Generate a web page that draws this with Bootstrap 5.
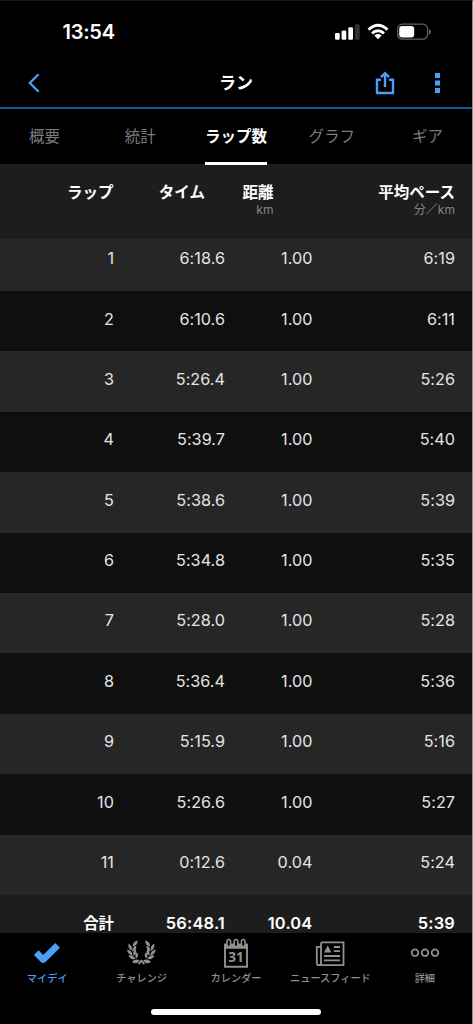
<!DOCTYPE html>
<html lang="ja" data-bs-theme="dark">
<head>
<meta charset="utf-8">
<meta name="viewport" content="width=device-width, initial-scale=1">
<title>ラン</title>
<link href="https://cdn.jsdelivr.net/npm/bootstrap@5.3.0/dist/css/bootstrap.min.css" rel="stylesheet">
<style>
body{background:#000;color:#fff;font-family:Inter,"Noto Sans CJK JP",sans-serif;font-size:16px;line-height:24px}
.app{width:473px;height:1024px;border-right:1px solid #8a8a8a;border-top:1px solid #161616}
svg{display:block;flex:none}
.status{height:62px;padding:0 40px 0 62.5px}
.clock{font-size:20px;font-weight:600;letter-spacing:-.25px}
.titlebar{height:46px;padding:0 31px 4px 27px;border-bottom:2px solid #1256a8}
.titlebar h1{font-size:17px;line-height:24px;font-weight:700}
.tabs{height:55px;font-size:15.5px;color:#7b7b7b}
.tabs span{flex:none;width:62px;margin:0 16.9px;height:56px;padding-top:16px;text-align:center;white-space:nowrap}
.tabs span.on{color:#fff;font-weight:700;border-bottom:3px solid #fff;position:relative;z-index:1}
.heads{height:75px;background:#1d1d1d;padding-top:17px;font-size:15.5px;font-weight:700}
.heads>div{text-align:right;white-space:nowrap}
.heads small{display:block;font-size:12px;line-height:14px;font-weight:400;color:#858585;margin-top:-2px;letter-spacing:.05px}
.lap{height:60.4px;display:grid;grid-template-columns:114px 111px 87.5px 142.5px;text-align:right;padding-top:15.5px;background:#0f0f0f;color:#e4e4e4;flex:none;font-size:16.2px;letter-spacing:.04px}
.lap:nth-child(odd){background:#262626}
.lap:first-child{height:52px;padding-top:7px}
.lap.total{height:38px;padding-top:16px;background:#1d1d1d;color:#fff;font-weight:600;font-size:16.4px;letter-spacing:.2px}
.lap.total span:first-child{font-size:15.4px;font-weight:700;letter-spacing:0;padding-top:1px}
.bottom{height:90px;color:#919191;font-size:10.2px;line-height:14px;font-weight:500}
.bottom .item{flex:1 1 0;height:54px;padding-top:5px}
.bottom .item svg{margin-bottom:3px}
.active-blue{color:#4a9ff8}
.homebar{width:170px;height:6px;border-radius:3px;background:#fff;margin:22px auto 0}
</style>
</head>
<body>
<div class="app d-flex flex-column overflow-hidden">
  <header>
    <div class="status d-flex align-items-center justify-content-between">
      <span class="clock">13:54</span>
      <svg width="98" height="18" viewBox="334 23 98 18">
        <g fill="#fff"><rect x="335" y="33" width="4.7" height="6.7" rx="1.3"/><rect x="341.6" y="30.5" width="4.7" height="9.2" rx="1.3"/><rect x="348.3" y="27.2" width="4.7" height="12.5" rx="1.3"/></g>
        <rect x="354.9" y="24.2" width="4.7" height="15.5" rx="1.3" fill="#333"/>
        <g fill="none" stroke="#fff" stroke-width="2.9"><path d="M368.5 29.6Q378 21 387.5 29.6"/><path d="M372 33.4Q378 28 384 33.4"/></g>
        <path d="M374.3 35.5Q378 32.7 381.7 35.5L378 39.3Z" fill="#fff"/>
        <rect x="397.6" y="24.2" width="30" height="15" rx="4.8" fill="none" stroke="#636363" stroke-width="1.2"/>
        <rect x="399.2" y="26" width="15" height="11.5" rx="3" fill="#fff"/><path d="M429 29v5.5q2-.8 2-2.7t-2-2.8Z" fill="#636363"/>
      </svg>
    </div>
    <div class="titlebar d-flex align-items-center justify-content-between position-relative active-blue">
      <svg width="14" height="22" viewBox="0 0 14 22" fill="none" stroke="currentColor" stroke-width="2.3"><path d="M11.6 2.2 2.8 11 11.6 19.8"/></svg>
      <h1 class="m-0 text-white position-absolute start-0 end-0 text-center">ラン</h1>
      <div class="d-flex align-items-center">
        <svg width="20" height="24" viewBox="0 0 20 24" fill="none" stroke="currentColor" stroke-width="2.4"><path d="M6 8.8H2v13.2h16V8.8h-4M10 16V2.5M6 6.2 10 2.2l4 4"/></svg>
        <svg width="46" height="22" viewBox="0 0 46 22" fill="currentColor"><path d="M40 1h5v5h-5zM40 8.5h5v5h-5zM40 16h5v5h-5z"/></svg>
      </div>
    </div>
    <nav class="tabs d-flex justify-content-center"><span>概要</span><span>統計</span><span class="on">ラップ数</span><span>グラフ</span><span>ギア</span></nav>
  </header>
  <div class="heads d-flex">
    <div style="width:113.5px">ラップ</div><div style="width:91.5px">タイム</div><div style="width:68.5px">距離<small>km</small></div><div style="width:181.5px">平均ペース<small>分／km</small></div>
  </div>
  <main class="d-flex flex-column">
    <div class="lap"><span>1</span><span>6:18.6</span><span>1.00</span><span>6:19</span></div>
    <div class="lap"><span>2</span><span>6:10.6</span><span>1.00</span><span>6:11</span></div>
    <div class="lap"><span>3</span><span>5:26.4</span><span>1.00</span><span>5:26</span></div>
    <div class="lap"><span>4</span><span>5:39.7</span><span>1.00</span><span>5:40</span></div>
    <div class="lap"><span>5</span><span>5:38.6</span><span>1.00</span><span>5:39</span></div>
    <div class="lap"><span>6</span><span>5:34.8</span><span>1.00</span><span>5:35</span></div>
    <div class="lap"><span>7</span><span>5:28.0</span><span>1.00</span><span>5:28</span></div>
    <div class="lap"><span>8</span><span>5:36.4</span><span>1.00</span><span>5:36</span></div>
    <div class="lap"><span>9</span><span>5:15.9</span><span>1.00</span><span>5:16</span></div>
    <div class="lap"><span>10</span><span>5:26.6</span><span>1.00</span><span>5:27</span></div>
    <div class="lap"><span>11</span><span>0:12.6</span><span>0.04</span><span>5:24</span></div>
    <div class="lap total"><span>合計</span><span>56:48.1</span><span>10.04</span><span>5:39</span></div>
  </main>
  <footer class="bottom">
    <div class="d-flex">
      <div class="item d-flex flex-column align-items-center active-blue">
        <svg width="28" height="30" viewBox="0 0 28 30"><path d="M3.2 14.6 10.2 21.6 24.6 7.4" fill="none" stroke="currentColor" stroke-width="6.6" stroke-linejoin="round"/></svg>マイデイ
      </div>
      <div class="item d-flex flex-column align-items-center">
        <svg width="30" height="30" viewBox="0 0 30 30" fill="currentColor">
          <defs><g id="branch">
            <path d="M6.2 9.4Q6.6 4.4 11.2 3.6Q11.4 8.8 6.2 9.4Z"/>
            <path d="M5.2 13.8Q1.2 11.6 2.2 6.6Q6.6 9.2 5.2 13.8Z"/>
            <path d="M5.9 14.6Q5.4 10.4 9.8 8.6Q10.6 13.4 5.9 14.6Z"/>
            <path d="M6.2 18.4Q1.2 17.4 .7 12.4Q5.6 13.4 6.2 18.4Z"/>
            <path d="M7.2 18.6Q5.8 14.8 9.2 12.2Q11.4 16.4 7.2 18.6Z"/>
            <path d="M9 22Q4 23.2 1.9 18.6Q7 17.4 9 22Z"/>
            <path d="M9.8 21.6Q7.8 18.2 10.4 15.3Q13.4 18.6 9.8 21.6Z"/>
            <path d="M13.4 23.4Q10 28 5.4 25Q8.6 20.8 13.4 23.4Z"/>
            <path d="M11.6 26.4 15 22.6 18.4 26.4 17.2 27.4 15 25 12.8 27.4Z"/>
          </g></defs>
          <g transform="translate(-.6 -1)"><use href="#branch"/><use href="#branch" transform="translate(30 0) scale(-1 1)"/></g>
        </svg>チャレンジ
      </div>
      <div class="item d-flex flex-column align-items-center">
        <svg width="26" height="30" viewBox="0 0 26 30"><path d="M2 9.5H24V28.8H2Z" fill="none" stroke="currentColor" stroke-width="1.9"/><path d="M1.1 5.5H24.9V10.5H1.1Z" fill="currentColor"/><g fill="#000" stroke="currentColor" stroke-width="1.5"><rect x="4" y="1.6" width="3.6" height="7" rx="1.8"/><rect x="11.2" y="1.6" width="3.6" height="7" rx="1.8"/><rect x="18.4" y="1.6" width="3.6" height="7" rx="1.8"/></g><text x="13" y="24.3" text-anchor="middle" font-family="Open Sans" font-weight="700" font-size="13.5" fill="currentColor">31</text></svg>カレンダー
      </div>
      <div class="item d-flex flex-column align-items-center">
        <svg width="30" height="30" viewBox="0 0 30 30" fill="none" stroke="currentColor" stroke-width="1.8"><path d="M6 4.4H28.5V27.2H4Q1.8 27.2 1.8 25V8.8H6M6 4.4V25Q6 27 4.2 27"/><path d="M18.8 9H25M18.8 13.2H25M9 18H25M9 22.3H25"/><path d="M9 14.4 12.7 7.6 16.4 14.4Z" fill="currentColor" stroke="none"/></svg><span class="text-nowrap">ニュースフィード</span>
      </div>
      <div class="item d-flex flex-column align-items-center">
        <svg width="30" height="30" viewBox="0 0 30 30" fill="none" stroke="currentColor" stroke-width="1.7"><circle cx="5" cy="14.7" r="3.3"/><circle cx="15" cy="14.7" r="3.3"/><circle cx="25" cy="14.7" r="3.3"/></svg>詳細
      </div>
    </div>
    <div class="homebar"></div>
  </footer>
</div>
<script src="https://cdn.jsdelivr.net/npm/bootstrap@5.3.0/dist/js/bootstrap.bundle.min.js"></script>
</body>
</html>
